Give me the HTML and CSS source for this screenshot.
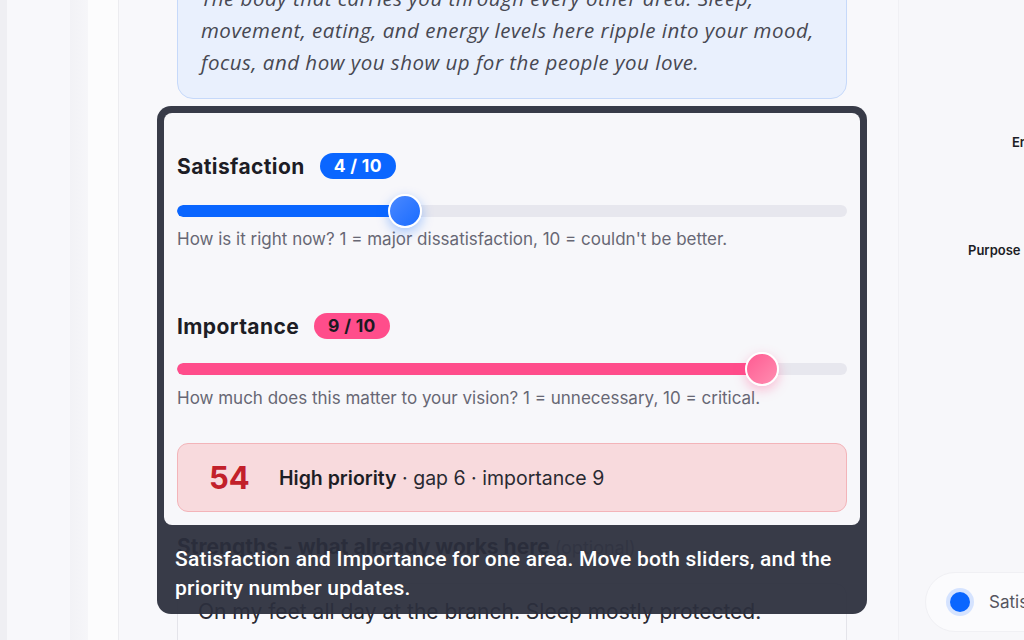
FILE: index.html
```html
<!DOCTYPE html>
<html>
<head>
<meta charset="utf-8">
<link rel="stylesheet" href="styles.css">
</head>
<body>
<div class="app">
  <div class="rail">
    <div class="band b1"></div>
    <div class="band b2"></div>
    <div class="band b3"></div>
    <div class="band b4"></div>
  </div>
  <main class="main">
    <div class="column">
      <div class="intro">The body that carries you through every other area. Sleep, movement, eating, and energy levels here ripple into your mood, focus, and how you show up for the people you love.</div>

      <div class="tour-target">
        <div class="tour-frame">
          <p class="tour-caption">Satisfaction and Importance for one area. Move both sliders, and the priority number updates.</p>
        </div>
        <section class="rating-card">
          <div class="group">
            <div class="label-row">
              <h3 class="label">Satisfaction</h3>
              <span class="badge badge-blue">4 / 10</span>
            </div>
            <div class="slider slider-1">
              <div class="track"><div class="fill fill-blue" style="width:34%"></div></div>
              <div class="thumb thumb-blue" style="left:34.1%"></div>
            </div>
            <p class="hint">How is it right now? 1 = major dissatisfaction, 10 = couldn't be better.</p>
          </div>
          <div class="group group-2">
            <div class="label-row">
              <h3 class="label">Importance</h3>
              <span class="badge badge-pink">9 / 10</span>
            </div>
            <div class="slider">
              <div class="track"><div class="fill fill-pink" style="width:87%"></div></div>
              <div class="thumb thumb-pink" style="left:87.3%"></div>
            </div>
            <p class="hint hint-2">How much does this matter to your vision? 1 = unnecessary, 10 = critical.</p>
          </div>
          <div class="priority">
            <span class="score">54</span>
            <span class="priority-text"><strong>High priority</strong> · gap 6 · importance 9</span>
          </div>
        </section>
      </div>

      <h3 class="strengths">Strengths - what already works here <span class="optional">(optional)</span></h3>
      <div class="textbox">On my feet all day at the branch. Sleep mostly protected.</div>
    </div>
  </main>
  <aside class="aside">
    <span class="axis axis-en">Energy</span>
    <span class="axis axis-purpose">Purpose</span>
    <div class="legend">
      <span class="dot"></span>
      <span class="legend-text">Satisfaction</span>
    </div>
  </aside>
</div>
</body>
</html>
```

FILE: styles.css
```css
* { box-sizing: border-box; }
html, body { margin: 0; padding: 0; }
body {
  width: 1024px;
  height: 640px;
  overflow: hidden;
  background: #f8f8fb;
  font-family: Inter, "Liberation Sans", sans-serif;
  color: #1c1c24;
}
.app {
  display: flex;
  width: 1024px;
  height: 640px;
  overflow: hidden;
}
.rail {
  display: flex;
  width: 119px;
  flex: none;
  border-right: 1px solid #ececf0;
}
.band { height: 100%; }
.b1 { width: 7px; background: #efeff3; }
.b2 { width: 63px; background: #f8f8fb; }
.b3 { width: 18px; background: linear-gradient(90deg, #f2f2f6, #f6f6f9); }
.b4 { flex: 1; background: #fcfcfd; }

.main {
  flex: 1;
  min-width: 0;
  background: #f8f8fb;
}
.column {
  width: 670px;
  margin-left: 58px;
  margin-top: -39px;
}
.intro {
  background: #e9f0fd;
  border: 1px solid #c6d9fa;
  border-radius: 16px;
  padding: 20px 18px 20px 23px;
  font-family: "Open Sans", sans-serif;
  font-style: italic;
  font-size: 20.5px;
  letter-spacing: 0.5px;
  line-height: 32px;
  color: #474852;
}
.tour-target {
  position: relative;
  margin-top: 14px;
}
.tour-frame {
  position: absolute;
  z-index: 1;
  top: -7px;
  left: -20px;
  right: -20px;
  background: rgba(44, 47, 61, 0.94);
  border-radius: 14px;
  padding: 439px 18px 11px 18px;
}
.tour-caption {
  margin: 0;
  font-family: Roboto, sans-serif;
  font-weight: 500;
  font-size: 21px;
  letter-spacing: 0.2px;
  line-height: 29px;
  color: #ffffff;
}
.rating-card {
  position: relative;
  z-index: 2;
  margin: 0 -13px;
  padding: 13px;
  background: #f7f7fa;
  border-radius: 8px;
}
.group { padding-top: 27px; }
.group-2 { padding-top: 63px; }
.label-row {
  display: flex;
  align-items: center;
  gap: 15px;
  height: 26px;
}
.label {
  margin: 0;
  font-size: 21px;
  letter-spacing: 0.4px;
  font-weight: 700;
  color: #1d1d25;
}
.badge {
  height: 26px;
  padding: 0 14px;
  border-radius: 13px;
  font-size: 17.5px;
  letter-spacing: 0.3px;
  font-weight: 700;
  line-height: 26px;
}
.badge-blue { background: #0a66ff; color: #ffffff; }
.badge-pink { background: #ff4d8b; color: #1a1a22; }
.slider {
  position: relative;
  height: 32px;
  margin-top: 14px;
  display: flex;
  align-items: center;
}
.slider-1 { margin-top: 16px; }
.track {
  width: 100%;
  height: 12px;
  border-radius: 6px;
  background: #e7e7ee;
  overflow: hidden;
}
.fill { height: 100%; border-radius: 6px; }
.fill-blue { background: #0a66ff; }
.fill-pink { background: #ff4d8b; }
.thumb {
  position: absolute;
  top: 0;
  width: 34px;
  height: 34px;
  margin-left: -17px;
  margin-top: -1px;
  border-radius: 50%;
  border: 2px solid #ffffff;
}
.thumb-blue {
  background: linear-gradient(135deg, #4a88ff, #1a6cff);
  box-shadow: 0 4px 12px rgba(10, 102, 255, 0.35);
}
.thumb-pink {
  background: linear-gradient(135deg, #ff5b92, #ff8db0);
  box-shadow: 0 4px 12px rgba(255, 77, 139, 0.35);
}
.hint {
  margin: 1px 0 0;
  font-size: 17px;
  line-height: 22px;
  color: #676774;
}
.hint-2 { margin-top: 2px; }
.priority {
  display: flex;
  align-items: center;
  margin-top: 34px;
  height: 69px;
  padding: 0 31px;
  background: #f8dadd;
  border: 1px solid #f3b4b9;
  border-radius: 11px;
}
.score {
  width: 70px;
  font-size: 31px;
  font-weight: 700;
  color: #c2202a;
}
.priority-text {
  font-size: 19.5px;
  color: #2a2a32;
}
.priority-text strong { font-weight: 600; color: #1d1d25; }

.strengths {
  margin: 10px 0 0;
  font-size: 21px;
  font-weight: 700;
  line-height: 24px;
  color: #1d1d25;
}
.optional { font-weight: 400; color: #8a8a96; font-size: 18px; }
.textbox {
  margin-top: 23px;
  height: 80px;
  padding: 15px 20px;
  background: #f9f9fc;
  border: 1px solid #e4e4ea;
  border-radius: 12px;
  font-size: 21px;
  line-height: 26px;
  color: #2a2a32;
}

.aside {
  position: relative;
  width: 126px;
  flex: none;
  background: #f7f7fa;
  border-left: 1px solid #f0f0f4;
  overflow: hidden;
}
.axis {
  position: absolute;
  font-size: 13px;
  font-weight: 600;
  color: #1d1d25;
  white-space: nowrap;
}
.axis-en { left: 113px; top: 134px; }
.axis-purpose { left: 69px; top: 242px; }
.legend {
  position: absolute;
  left: 26px;
  top: 572px;
  display: flex;
  align-items: center;
  gap: 19px;
  width: 220px;
  height: 60px;
  padding-left: 24px;
  background: #fbfbfd;
  border: 1px solid #f0f0f4;
  border-radius: 30px;
}
.dot {
  width: 20px;
  height: 20px;
  border-radius: 50%;
  background: #0a66ff;
  box-shadow: 0 0 0 4px #d5e3ff;
  flex: none;
}
.legend-text { font-size: 17px; color: #55555f; }
```
